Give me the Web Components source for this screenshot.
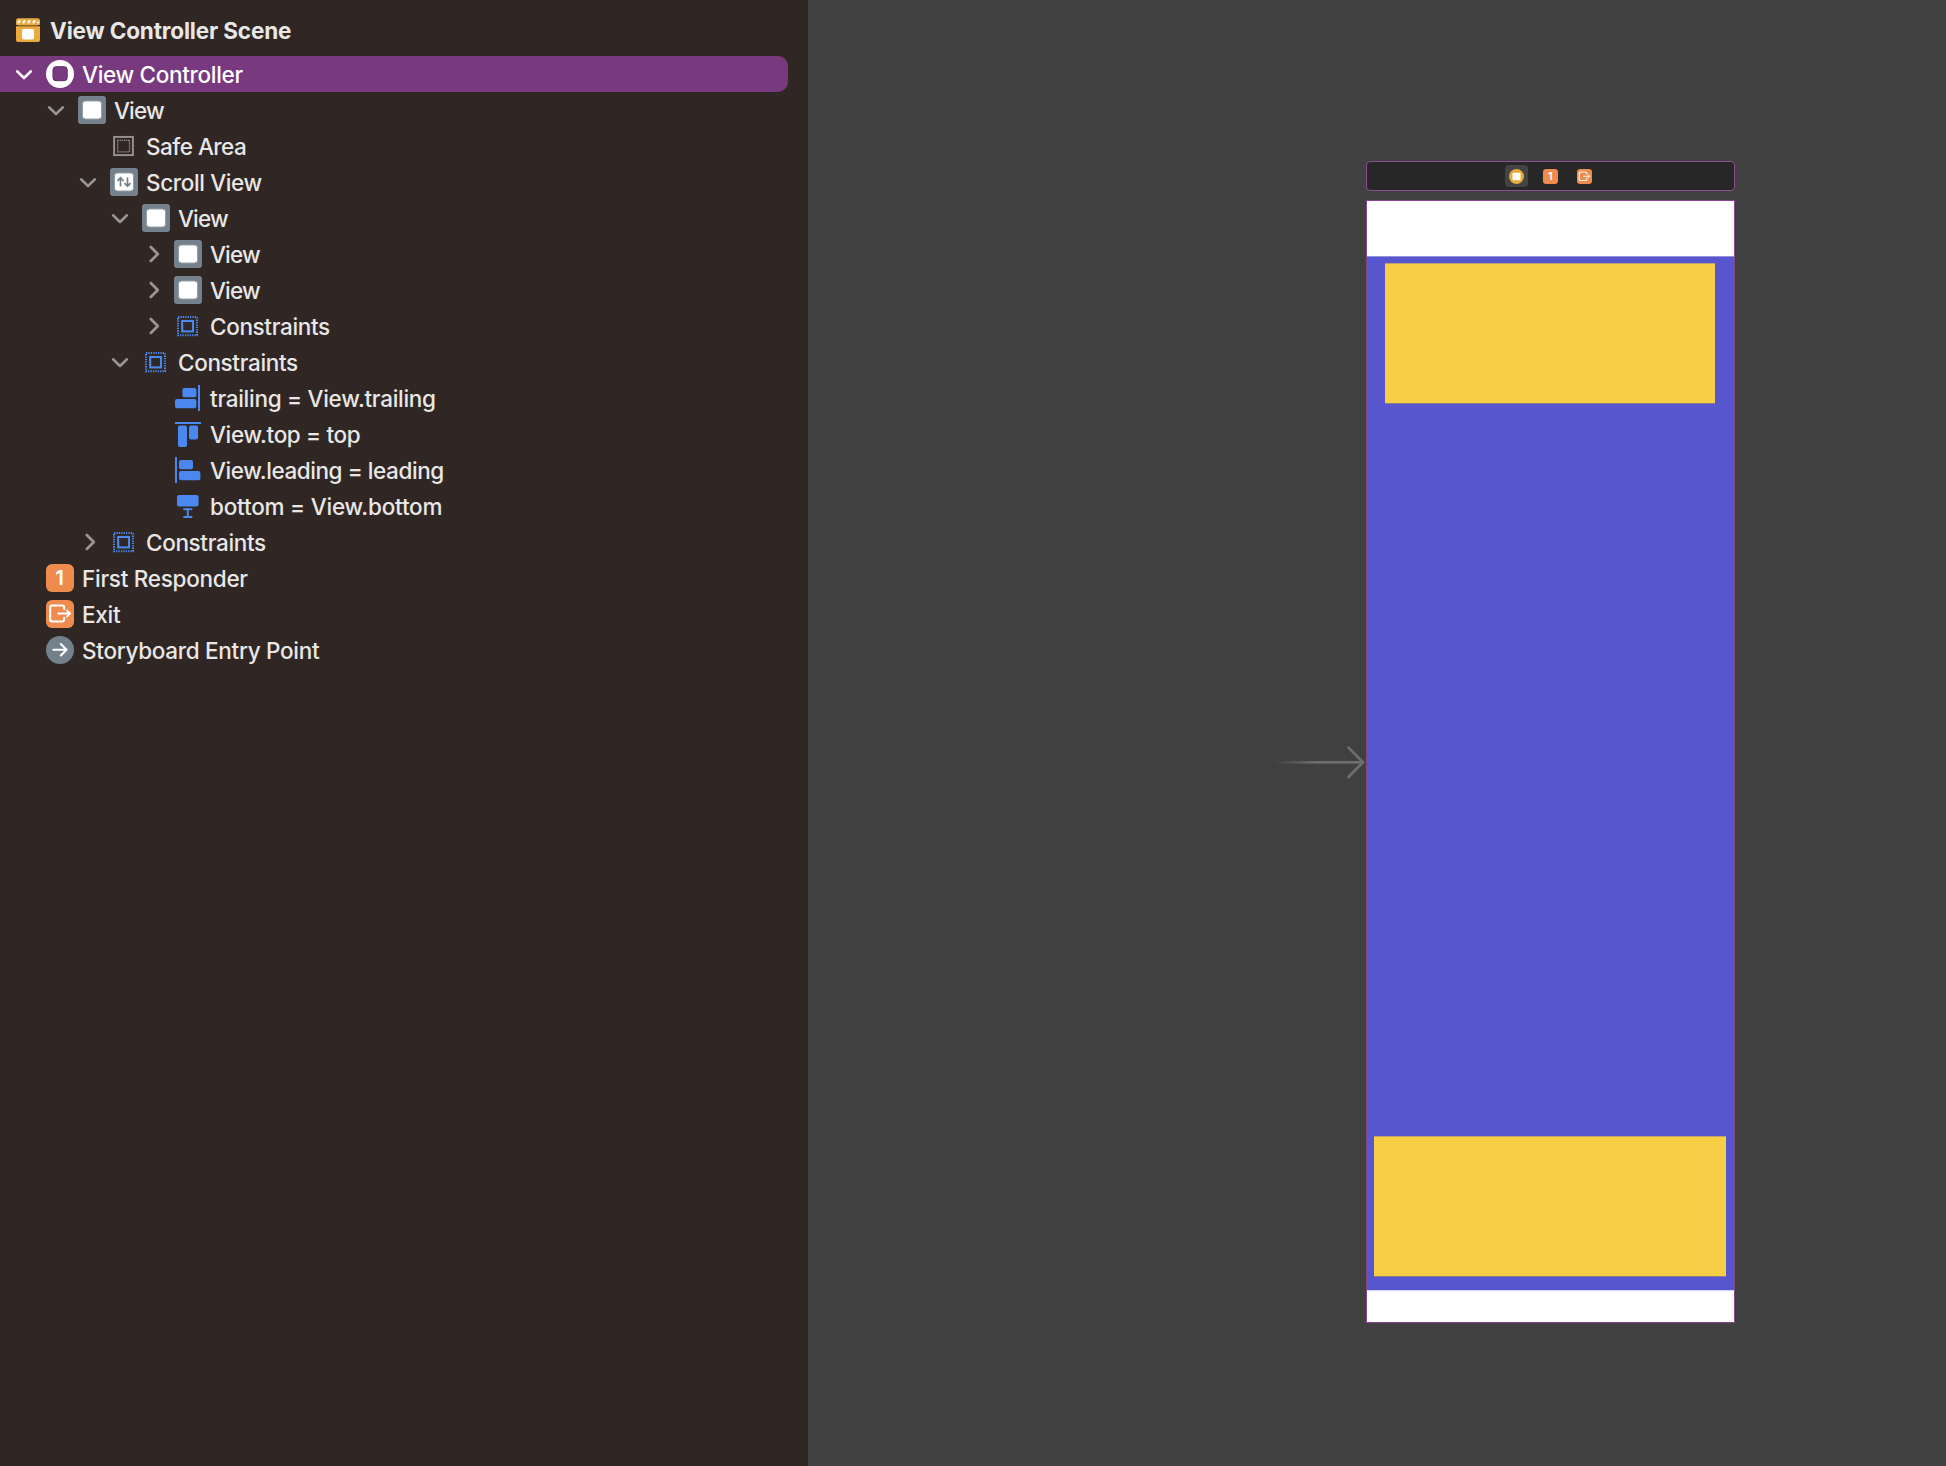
<!DOCTYPE html>
<html lang="en">
<head>
<meta charset="utf-8">
<title>Storyboard</title>
<style>
html, body { margin: 0; height: 100%; overflow: hidden; background: #404040; }
body { font-family: Inter, "Liberation Sans", sans-serif; color: #e9e7e6; }
</style>
</head>
<body>
<story-editor></story-editor>
<script>
const ICONS = {
  scene: `<rect x="2" y="2.2" width="24" height="7.2" rx="2.4" fill="#eaaa3d"/><rect x="2" y="6" width="24" height="2.8" fill="#eaaa3d"/><path d="M4 7l2-2.6M9 7l2-2.6M14 7l2-2.6M19 7l2-2.6M23.6 7l.8-1.2" stroke="#fff" stroke-width="2.2"/><path d="M2 10.2h24v13.2a2.6 2.6 0 0 1-2.6 2.6H4.600a2.600 2.600 0 0 1-2.600-2.600z" fill="#eaaa3d"/><rect x="8" y="13" width="12" height="10.600" rx="2" fill="#fff"/>`,
  controller: `<circle cx="14" cy="14" r="14" fill="#fff"/><rect x="7" y="6.700" width="14.200" height="14" rx="3" fill="#78397f" stroke="#5b2c66" stroke-width="1"/>`,
  view: `<rect width="28" height="28" rx="3" fill="#72818b"/><rect x="4.500" y="5" width="19" height="18" rx="3" fill="#fff" stroke="#94a0a8" stroke-width="1"/>`,
  scroll: `<rect width="28" height="28" rx="3" fill="#72818b"/><rect x="4.500" y="5" width="19" height="18" rx="3" fill="#fff" stroke="#94a0a8" stroke-width="1"/><path d="M10.500 18.500V10M7.500 12.800l3-3 3 3M17.500 9.500V18M14.500 15.200l3 3 3-3" fill="none" stroke="#72818b" stroke-width="1.700"/>`,
  safe: `<rect x="4.100" y="4.900" width="18.800" height="18.200" fill="none" stroke="#979290" stroke-width="1.900"/><rect x="7.700" y="8.400" width="11.800" height="11.400" fill="none" stroke="#979290" stroke-width="1.300" stroke-dasharray="1.200 .800"/>`,
  constraints: `<rect x="4" y="5" width="19" height="18.200" fill="none" stroke="#4a87ee" stroke-width="2" stroke-dasharray="1.300 1.100"/><rect x="8.200" y="9" width="10.800" height="10.400" fill="none" stroke="#4a87ee" stroke-width="2.100"/>`,
  trailing: `<g fill="#4a87ee"><rect x="8.400" y="4" width="14" height="9.200" rx="2"/><rect x="1" y="15" width="21.400" height="9.200" rx="2"/><rect x="24" y="1" width="2" height="26"/></g>`,
  top: `<g fill="#4a87ee"><rect x="1" y="2" width="26" height="2"/><rect x="4" y="5.600" width="9" height="21.400" rx="2"/><rect x="15" y="5.600" width="9" height="14" rx="2"/></g>`,
  leading: `<g fill="#4a87ee"><rect x="1" y="1" width="2" height="26"/><rect x="5" y="4" width="14" height="9.200" rx="2"/><rect x="5" y="15" width="21.400" height="9.200" rx="2"/></g>`,
  bottom: `<g fill="#4a87ee"><rect x="3" y="3" width="21.600" height="11.400" rx="2"/><rect x="9.300" y="16.200" width="9" height="2"/><rect x="12.800" y="16.200" width="2" height="9"/><rect x="9.300" y="24" width="9" height="2"/></g>`,
  responder: `<rect width="28" height="28" rx="6" fill="#ef8b4c"/><text x="13.600" y="21.300" text-anchor="middle" font-family="Inter" font-weight="600" font-size="20.500" fill="#fff">1</text>`,
  exit: `<rect width="28" height="28" rx="6" fill="#ef8b4c"/><path d="M18.200 10V7.500a2 2 0 0 0-2-2H6.200a2 2 0 0 0-2 2V19.500a2 2 0 0 0 2 2H16.200a2 2 0 0 0 2-2V17" fill="none" stroke="#fff" stroke-width="2"/><path d="M11.500 13.500H24M20.500 10l3.500 3.500-3.500 3.500" fill="none" stroke="#fff" stroke-width="1.800"/>`,
  entry: `<circle cx="14" cy="14" r="14" fill="#72818b"/><path d="M7.300 13.700H20.500M14.800 7.900l5.800 5.800-5.800 5.800" fill="none" stroke="#fff" stroke-width="2.100" stroke-linecap="round" stroke-linejoin="round"/>`,
  active: `<circle cx="14" cy="14" r="14" fill="#e8aa3b"/><rect x="6.500" y="7" width="15" height="14" rx="2" fill="#fff"/>`
};

class StoryIcon extends HTMLElement {
  connectedCallback() {
    const root = this.attachShadow({ mode: "open" });
    root.innerHTML = `<style>:host{display:block;flex:none;width:28px;height:28px}svg{display:block;width:100%;height:100%}</style>
      <svg viewBox="0 0 28 28">${ICONS[this.getAttribute("name")]}</svg>`;
  }
}
customElements.define("story-icon", StoryIcon);

/* One outline row. "ink" is the label's width in px; tracking is spread over its letters. */
class OutlineRow extends HTMLElement {
  connectedCallback() {
    const root = this.attachShadow({ mode: "open" });
    const level = Number(this.getAttribute("level") || 0);
    const state = this.getAttribute("state");
    const chevron = state === "open" ? `<path d="M4.200 8.400l6.800 6.600 6.800-6.600"/>`
      : state === "closed" ? `<path d="M9.800 4l7 7-7 7"/>` : "";
    root.innerHTML = `<style>
      :host{display:flex;align-items:center;height:36px;margin-right:20px;box-sizing:border-box;padding-left:${13 + 32 * level}px;color:#e9e7e6;--chev:#9b9694}
      :host([selected]){background:#78397f;border-radius:0 10px 10px 0;color:#fff;--chev:#fff}
      .chev{display:block;flex:none;width:22px;height:22px;margin-right:11px;fill:none;stroke:var(--chev);stroke-width:2.700;stroke-linecap:round;stroke-linejoin:round}
      .label{margin-left:8px;padding-top:1px;font-size:22.500px;line-height:36px;font-weight:500;white-space:pre}
      :host([heading]) .label{font-weight:700}
      :host([heading]){padding-left:0}
      :host([heading]) .chev{display:none}
      :host([heading]) story-icon{margin-left:14px}
    </style>
    <svg class="chev" viewBox="0 0 22 22">${chevron}</svg>
    <story-icon name="${this.getAttribute("icon")}"></story-icon><span class="label"></span>`;
    const label = root.querySelector(".label");
    label.textContent = this.getAttribute("label");
    const target = Number(this.getAttribute("ink")) + 0.8;
    const natural = label.getBoundingClientRect().width;
    label.style.letterSpacing = ((target - natural) / label.textContent.length).toFixed(3) + "px";
  }
}
customElements.define("outline-row", OutlineRow);

class DocumentOutline extends HTMLElement {
  connectedCallback() {
    const root = this.attachShadow({ mode: "open" });
    const rows = [
      [0, "open", "controller", "View Controller", 160, "selected"],
      [1, "open", "view", "View", 49],
      [2, "", "safe", "Safe Area", 99.500],
      [2, "open", "scroll", "Scroll View", 115],
      [3, "open", "view", "View", 49],
      [4, "closed", "view", "View", 49],
      [4, "closed", "view", "View", 49],
      [4, "closed", "constraints", "Constraints", 119],
      [3, "open", "constraints", "Constraints", 119],
      [4, "", "trailing", "trailing = View.trailing", 225],
      [4, "", "top", "View.top = top", 149.500],
      [4, "", "leading", "View.leading = leading", 233],
      [4, "", "bottom", "bottom = View.bottom", 231.500],
      [2, "closed", "constraints", "Constraints", 119],
      [0, "", "responder", "First Responder", 165],
      [0, "", "exit", "Exit", 37.500],
      [0, "", "entry", "Storyboard Entry Point", 236.500]
    ];
    root.innerHTML = `<style>
      :host{display:flex;flex-direction:column;flex:none;width:808px;height:100%;box-sizing:border-box;padding-top:12px;background:#302725}
      outline-row[heading]{margin-bottom:8px}
    </style>
    <outline-row heading icon="scene" label="View Controller Scene" ink="240.500"></outline-row>` +
    rows.map(([l, s, i, t, w, x]) => `<outline-row level="${l}" state="${s}" icon="${i}" label="${t}" ink="${w}" ${x || ""}></outline-row>`).join("");
  }
}
customElements.define("document-outline", DocumentOutline);

class SceneDock extends HTMLElement {
  connectedCallback() {
    this.attachShadow({ mode: "open" }).innerHTML = `<style>
      :host{display:flex;align-items:center;justify-content:center;gap:12px;height:30px;box-sizing:border-box;border:1px solid #88508d;border-radius:4px;background:#272727}
      span{display:flex;align-items:center;justify-content:center;width:22.600px;height:22px;border-radius:4px}
      .on{background:#434343;margin-right:-.600px}
      story-icon{width:15px;height:15px}
    </style><span class="on"><story-icon name="active"></story-icon></span><span><story-icon name="responder"></story-icon></span><span><story-icon name="exit"></story-icon></span>`;
  }
}
customElements.define("scene-dock", SceneDock);

class DeviceScreen extends HTMLElement {
  connectedCallback() {
    this.attachShadow({ mode: "open" }).innerHTML = `<style>
      :host{display:flex;flex-direction:column;height:1123px;box-sizing:border-box;border:1px solid #88458f;background:#fff}
      .scroll{display:flex;flex-direction:column;justify-content:space-between;height:1034px;margin:55px -1px 0;box-sizing:border-box;padding:7px 0 13px;background:#5856ce;
        border:solid #84477f;border-width:0 1px;box-shadow:inset 0 1px #9492df}
      .box{box-sizing:border-box;height:141px;background:#f8ce46;border-top:1px solid #bda36e;border-bottom:1px solid #8f7d8b}
      .first{margin:0 19px 0 18px}
      .last{margin:0 8px 0 7px}
      .edge{height:1px;background:#d7d6f4}
    </style><div class="scroll"><div class="box first"></div><div class="box last"></div></div><div class="edge"></div>`;
  }
}
customElements.define("device-screen", DeviceScreen);

class EntryArrow extends HTMLElement {
  connectedCallback() {
    this.attachShadow({ mode: "open" }).innerHTML = `<style>:host{display:block;width:94px;height:36px}svg{display:block}</style>
    <svg width="94" height="36" viewBox="0 0 94 36"><defs><linearGradient id="fade"><stop offset="0" stop-color="#6e6e6e" stop-opacity="0"/><stop offset=".5" stop-color="#6e6e6e"/></linearGradient></defs>
    <rect x="3" y="17" width="88" height="2.700" fill="url(#fade)"/><path d="M77.500 3.600L92 18.300 77.500 33" fill="none" stroke="#6e6e6e" stroke-width="2.700" stroke-linecap="round"/></svg>`;
  }
}
customElements.define("entry-arrow", EntryArrow);

class StoryCanvas extends HTMLElement {
  connectedCallback() {
    this.attachShadow({ mode: "open" }).innerHTML = `<style>
      :host{display:block;position:relative;flex:1;height:100%;box-sizing:border-box;padding:161px 0 0 558px;background:#404040}
      .scene{display:flex;flex-direction:column;gap:9px;width:369px}
      entry-arrow{position:absolute;left:463px;top:744px}
    </style><div class="scene"><scene-dock></scene-dock><device-screen></device-screen></div><entry-arrow></entry-arrow>`;
  }
}
customElements.define("story-canvas", StoryCanvas);

class StoryEditor extends HTMLElement {
  connectedCallback() {
    this.attachShadow({ mode: "open" }).innerHTML = `<style>:host{display:flex;height:100vh}</style>
      <document-outline></document-outline><story-canvas></story-canvas>`;
  }
}
customElements.define("story-editor", StoryEditor);
</script>
</body>
</html>
